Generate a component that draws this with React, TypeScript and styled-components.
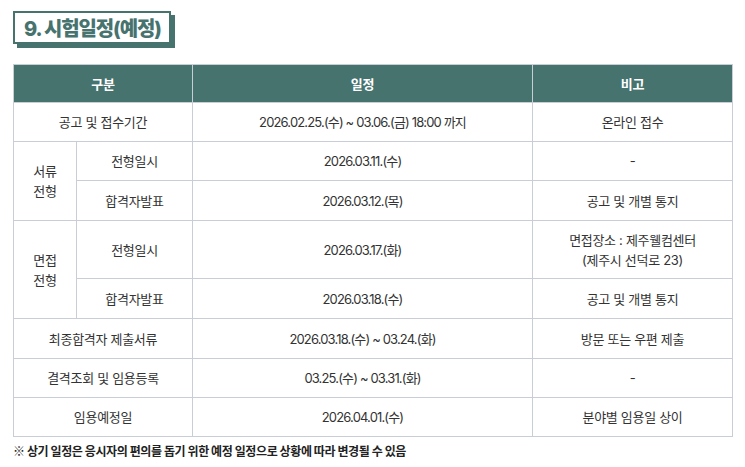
import React from "react";
import styled, { createGlobalStyle } from "styled-components";

const GREEN = "#47736f";
const LINE = "#c9cdd6";

const Global = createGlobalStyle`
  html, body { margin: 0; padding: 0; background: #fff; }
  body { font-family: Inter, "Noto Sans CJK KR", sans-serif; color: #333; }
`;

const Page = styled.div`
  padding: 11px 13px 0 13px;
  width: 745px;
  box-sizing: border-box;
`;

const TitleBox = styled.h2`
  display: inline-flex;
  align-items: center;
  box-sizing: border-box;
  height: 33px;
  margin: 0;
  padding: 0 8px 0 9px;
  border: 2px solid ${GREEN};
  background: #fff;
  box-shadow: 4px 4px 0 ${GREEN};
  color: ${GREEN};
  font-size: 20px;
  font-weight: 800;
  letter-spacing: -1.1px;
`;

const Table = styled.table`
  margin-top: 20px;
  width: 719px;
  border-collapse: collapse;
  table-layout: fixed;
  font-size: 13px;
  color: #333;
  letter-spacing: -0.3px;
`;

const Th = styled.th`
  background: ${GREEN};
  color: #fff;
  font-weight: 700;
  height: 37px;
  padding: 0;
  border: 1px solid ${LINE};
  font-size: 13px;
`;

const Td = styled.td<{ $h?: number; $num?: boolean }>`
  height: ${(p) => (p.$h ? p.$h : 38)}px;
  padding: 0;
  text-align: center;
  vertical-align: middle;
  border: 1px solid ${LINE};
  line-height: 20px;
  letter-spacing: ${(p) => (p.$num ? "-0.85px" : "-0.3px")};
`;

const Note = styled.p`
  margin: 5px 0 0 0;
  font-family: "Noto Sans CJK KR", sans-serif;
  font-size: 12px;
  font-weight: 700;
  color: #222;
  letter-spacing: -0.4px;
`;

export default function App() {
  return (
    <Page>
      <Global />
      <TitleBox>9. 시험일정(예정)</TitleBox>
      <Table>
        <colgroup>
          <col style={{ width: 63 }} />
          <col style={{ width: 116 }} />
          <col style={{ width: 340 }} />
          <col style={{ width: 200 }} />
        </colgroup>
        <thead>
          <tr>
            <Th colSpan={2}>구분</Th>
            <Th>일정</Th>
            <Th>비고</Th>
          </tr>
        </thead>
        <tbody>
          <tr>
            <Td colSpan={2}>공고 및 접수기간</Td>
            <Td $num>2026.02.25.(수) ~ 03.06.(금) 18:00 까지</Td>
            <Td>온라인 접수</Td>
          </tr>
          <tr>
            <Td rowSpan={2}>
              서류
              <br />
              전형
            </Td>
            <Td>전형일시</Td>
            <Td $num>2026.03.11.(수)</Td>
            <Td>-</Td>
          </tr>
          <tr>
            <Td $h={39}>합격자발표</Td>
            <Td $h={39} $num>2026.03.12.(목)</Td>
            <Td $h={39}>공고 및 개별 통지</Td>
          </tr>
          <tr>
            <Td rowSpan={2}>
              면접
              <br />
              전형
            </Td>
            <Td $h={57}>전형일시</Td>
            <Td $h={57} $num>2026.03.17.(화)</Td>
            <Td $h={57}>
              면접장소 : 제주웰컴센터
              <br />
              (제주시 선덕로 23)
            </Td>
          </tr>
          <tr>
            <Td $h={39}>합격자발표</Td>
            <Td $h={39} $num>2026.03.18.(수)</Td>
            <Td $h={39}>공고 및 개별 통지</Td>
          </tr>
          <tr>
            <Td colSpan={2} $h={39}>최종합격자 제출서류</Td>
            <Td $h={39} $num>2026.03.18.(수) ~ 03.24.(화)</Td>
            <Td $h={39}>방문 또는 우편 제출</Td>
          </tr>
          <tr>
            <Td colSpan={2}>결격조회 및 임용등록</Td>
            <Td $num>03.25.(수) ~ 03.31.(화)</Td>
            <Td>-</Td>
          </tr>
          <tr>
            <Td colSpan={2}>임용예정일</Td>
            <Td $num>2026.04.01.(수)</Td>
            <Td>분야별 임용일 상이</Td>
          </tr>
        </tbody>
      </Table>
      <Note>※ 상기 일정은 응시자의 편의를 돕기 위한 예정 일정으로 상황에 따라 변경될 수 있음</Note>
    </Page>
  );
}
